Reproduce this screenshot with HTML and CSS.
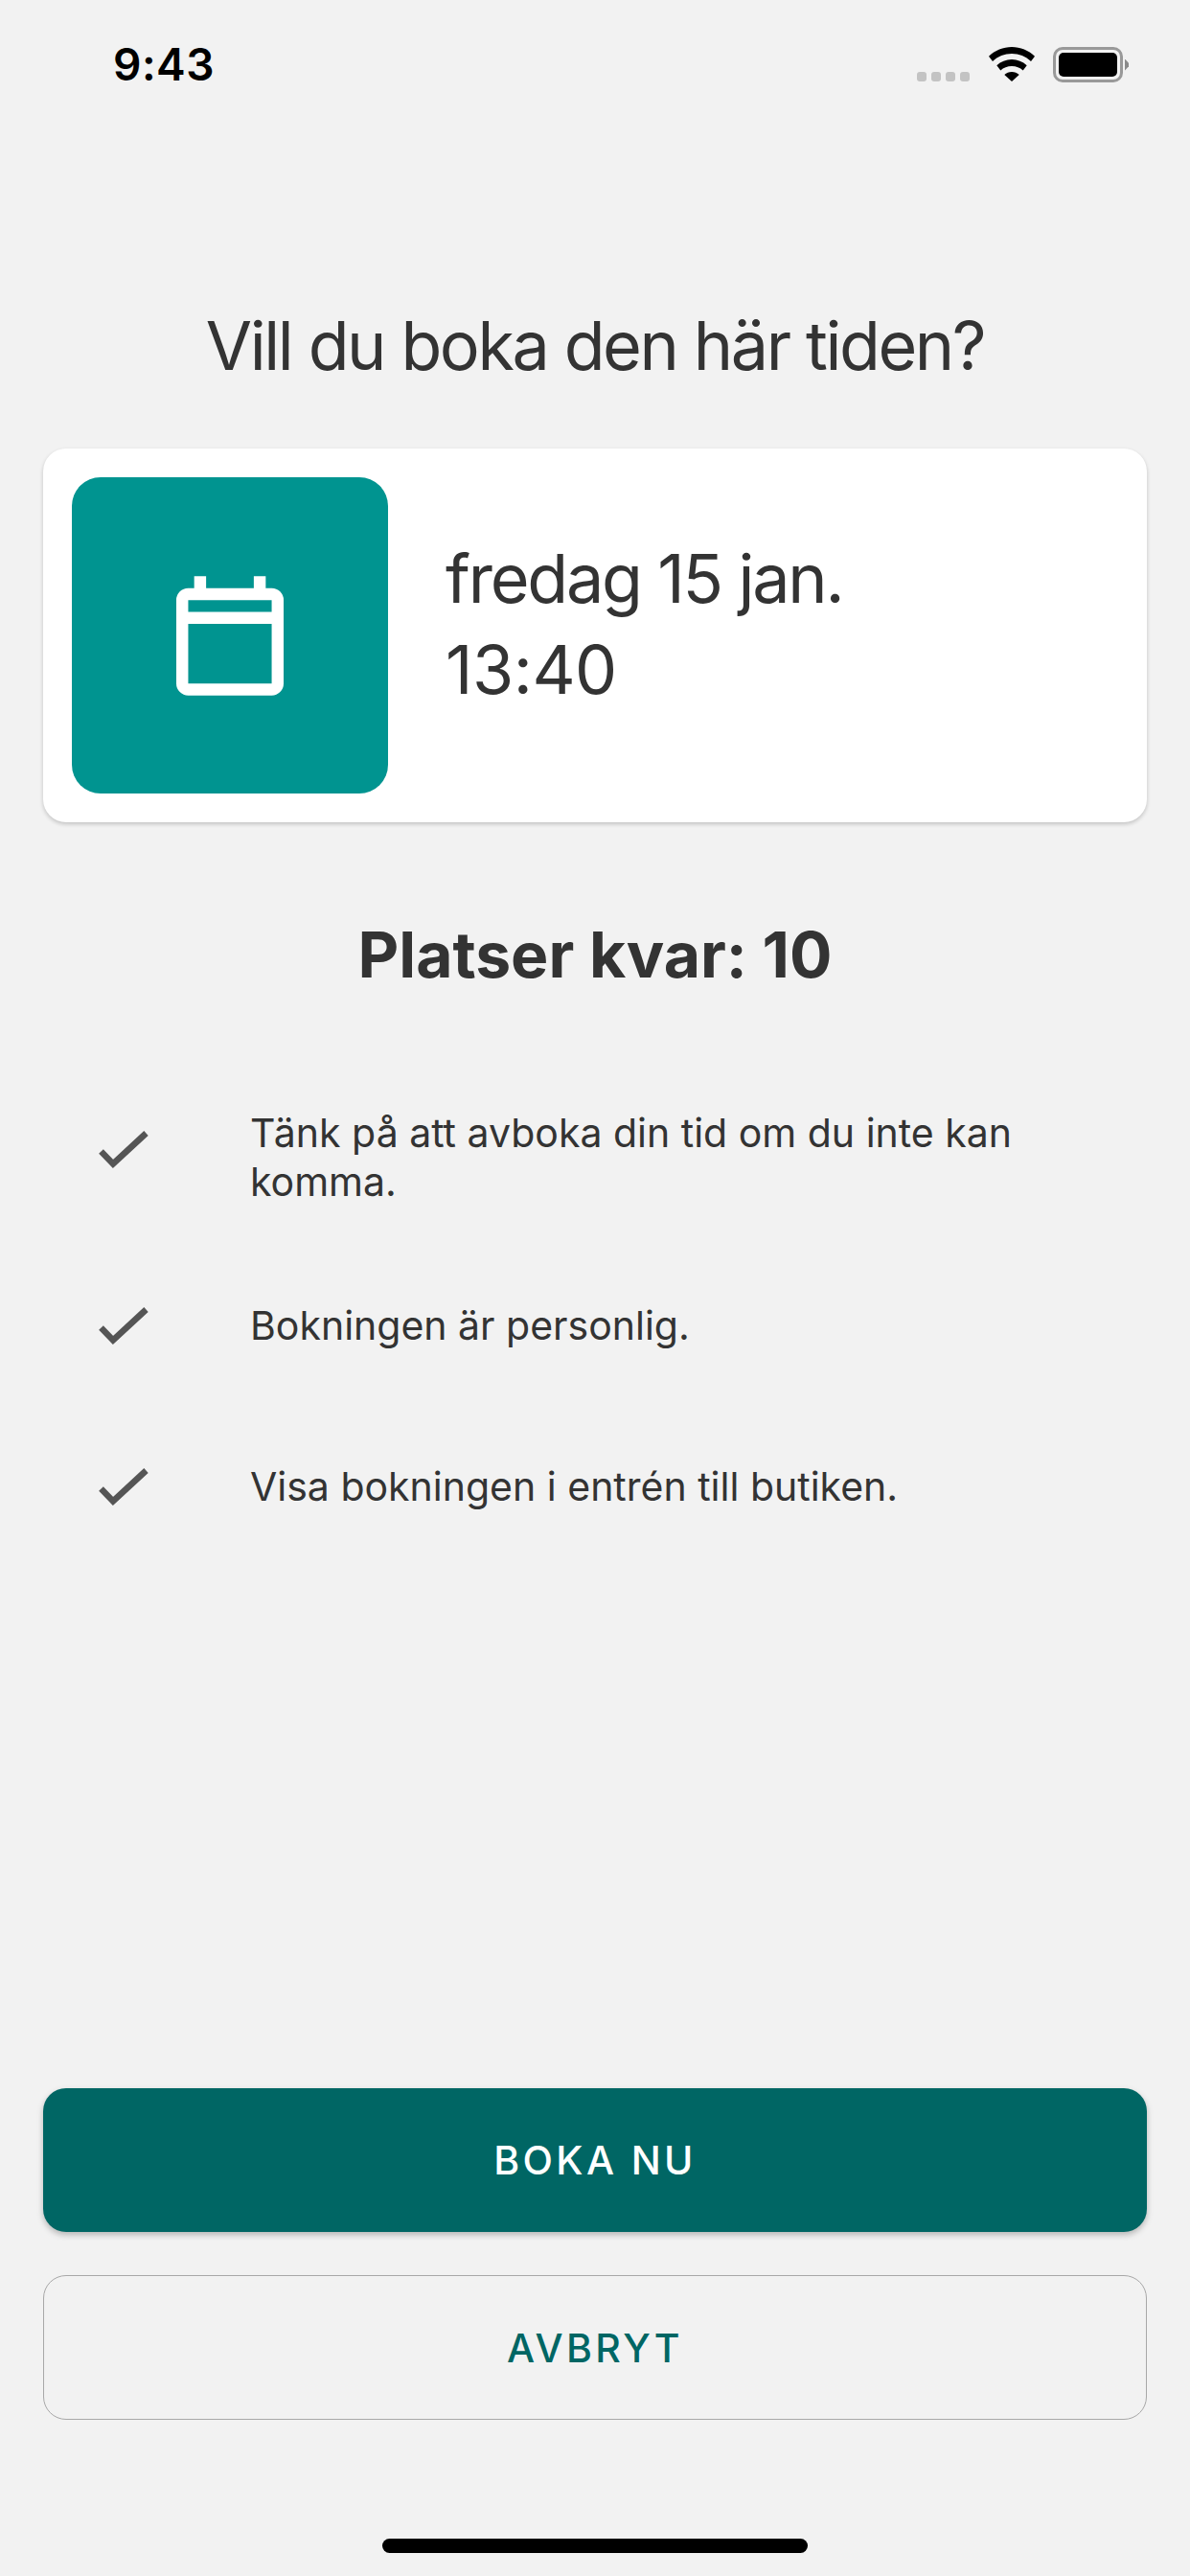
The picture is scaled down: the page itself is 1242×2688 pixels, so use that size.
FILE: index.html
```html
<!DOCTYPE html>
<html lang="sv">
<head>
    <meta charset="UTF-8">
    <meta name="viewport" content="width=device-width, initial-scale=1.0">
    <title>Boka tid</title>
    <link rel="stylesheet" href="styles.css">
</head>
<body>
    <div class="screen">
        <div class="status-bar">
            <span class="status-time">9:43</span>
            <div class="status-icons">
                <div class="signal">
                    <span class="signal-dot"></span>
                    <span class="signal-dot"></span>
                    <span class="signal-dot"></span>
                    <span class="signal-dot"></span>
                </div>
                <svg class="wifi-icon" viewBox="0 0 48 36">
                    <path d="M24 0C15 0 6.500 3.600 0 9.700L4 15C9.400 9.900 16.400 7 24 7s14.600 2.900 20 8l4-5.300C41.500 3.600 33 0 24 0z"/>
                    <path d="M24 13c-6 0-11.400 2.300-15.700 6.200l4 5.300C15.300 21.700 19.500 20 24 20s8.700 1.700 11.700 4.500l4-5.300C35.400 15.300 30 13 24 13z"/>
                    <path d="M24 26c-3 0-5.600 1-7.700 2.900L24 36l7.700-7.100C29.600 27 27 26 24 26z"/>
                </svg>
                <div class="battery">
                    <div class="battery-body"><div class="battery-fill"></div></div>
                    <span class="battery-nub"></span>
                </div>
            </div>
        </div>

        <h1 class="title">Vill du boka den här tiden?</h1>

        <div class="time-card">
            <div class="date-tile">
                <svg class="calendar-icon" viewBox="0 0 18 20">
                    <path fill-rule="evenodd" d="M3 0h2v2h8V0h2v2h1a2 2 0 0 1 2 2v14a2 2 0 0 1-2 2H2a2 2 0 0 1-2-2V4a2 2 0 0 1 2-2h1zM2 4v2h14V4zM2 8v10h14V8z"/>
                </svg>
            </div>
            <div class="time-text">
                <div>fredag 15 jan.</div>
                <div class="time-clock">13:40</div>
            </div>
        </div>

        <h2 class="spots-left">Platser kvar: 10</h2>

        <ul class="rules">
            <li class="rule rule-wrapped">
                <svg class="check-icon" viewBox="0 0 54 42"><path d="M4.500 22.500 17 35.500 51.500 3.500"/></svg>
                <span>Tänk på att avboka din tid om du inte kan komma.</span>
            </li>
            <li class="rule">
                <svg class="check-icon" viewBox="0 0 54 42"><path d="M4.500 22.500 17 35.500 51.500 3.500"/></svg>
                <span>Bokningen är personlig.</span>
            </li>
            <li class="rule">
                <svg class="check-icon" viewBox="0 0 54 42"><path d="M4.500 22.500 17 35.500 51.500 3.500"/></svg>
                <span>Visa bokningen i entrén till butiken.</span>
            </li>
        </ul>

        <div class="actions">
            <button class="btn btn-primary">BOKA NU</button>
            <button class="btn btn-outline">AVBRYT</button>
        </div>

        <div class="home-bar"></div>
    </div>
</body>
</html>
```

FILE: styles.css
```css
* {
    margin: 0;
    padding: 0;
    box-sizing: border-box;
    font-family: 'Inter', 'Liberation Sans', sans-serif;
}

body {
    background-color: #f2f2f2;
    color: #333333;
}

.screen {
    width: 1242px;
    height: 2688px;
    display: flex;
    flex-direction: column;
    padding: 0 45px;
}

/* Status bar */
.status-bar {
    height: 136px;
    margin: 0 -45px;
    padding: 49px 64px 0 118px;
    display: flex;
    justify-content: space-between;
    align-items: flex-start;
}

.status-time {
    font-size: 46px;
    line-height: 37px;
    font-weight: 600;
    letter-spacing: 0.5px;
    color: #000000;
}

.status-icons {
    display: flex;
    align-items: flex-start;
}

.signal {
    display: flex;
    gap: 5px;
    margin-top: 26px;
}

.signal-dot {
    width: 10px;
    height: 10px;
    border-radius: 3px;
    background: #c3c3c3;
}

.wifi-icon {
    width: 48px;
    height: 36px;
    margin-left: 20px;
    fill: #000000;
}

.battery {
    display: flex;
    align-items: center;
    height: 37px;
    margin-left: 19px;
}

.battery-body {
    width: 73px;
    height: 37px;
    border: 3px solid #999999;
    border-radius: 10px;
    padding: 3px;
}

.battery-fill {
    height: 100%;
    background: #000000;
    border-radius: 5px;
}

.battery-nub {
    width: 4px;
    height: 12px;
    margin-left: 2px;
    background: #8a8a8a;
    clip-path: polygon(0 0, 100% 35%, 100% 65%, 0 100%);
}

/* Heading and card */
.title {
    font-size: 70px;
    line-height: 80px;
    font-weight: 400;
    letter-spacing: -2.400px;
    text-align: center;
    margin-top: 185px;
}

.time-card {
    height: 390px;
    margin-top: 67px;
    padding: 30px;
    display: flex;
    align-items: center;
    background: #ffffff;
    border-radius: 24px;
    box-shadow: 0 2px 4px rgba(0, 0, 0, 0.2);
}

.date-tile {
    width: 330px;
    height: 330px;
    display: flex;
    justify-content: center;
    align-items: center;
    background: #009490;
    border-radius: 30px;
}

.calendar-icon {
    width: 112px;
    height: 125px;
    fill: #ffffff;
}

.time-text {
    margin-left: 60px;
    margin-bottom: 24px;
    font-size: 70px;
    line-height: 95px;
    font-weight: 400;
    letter-spacing: -2.200px;
}

.time-clock {
    letter-spacing: -0.500px;
}

.spots-left {
    font-size: 66px;
    line-height: 80px;
    font-weight: 700;
    text-align: center;
    margin-top: 98px;
}

/* Rules list */
.rules {
    list-style: none;
    margin-top: 121px;
    display: flex;
    flex-direction: column;
    gap: 81px;
}

.rule {
    display: flex;
    align-items: center;
    min-height: 87px;
    padding-left: 56px;
    font-size: 41px;
    line-height: 51px;
}

.rule span {
    width: 850px;
}

.check-icon {
    width: 54px;
    height: 42px;
    flex-shrink: 0;
    margin-right: 106px;
    fill: none;
    stroke: #555555;
    stroke-width: 6.500;
}

.rule-wrapped .check-icon {
    margin-top: -16px;
}

/* Buttons */
.actions {
    margin-top: auto;
    display: flex;
    flex-direction: column;
    gap: 45px;
}

.btn {
    width: 100%;
    font-size: 41px;
    font-weight: 500;
    letter-spacing: 3.400px;
    border-radius: 24px;
    background: none;
    border: none;
}

.btn-primary {
    height: 150px;
    color: #ffffff;
    background: #006664;
    box-shadow: 0 3px 6px rgba(0, 0, 0, 0.25);
}

.btn-outline {
    height: 151px;
    color: #006664;
    border: 1px solid #a8a8a8;
}

.home-bar {
    width: 444px;
    height: 15px;
    margin: 124px auto 24px;
    background: #000000;
    border-radius: 8px;
}
```
